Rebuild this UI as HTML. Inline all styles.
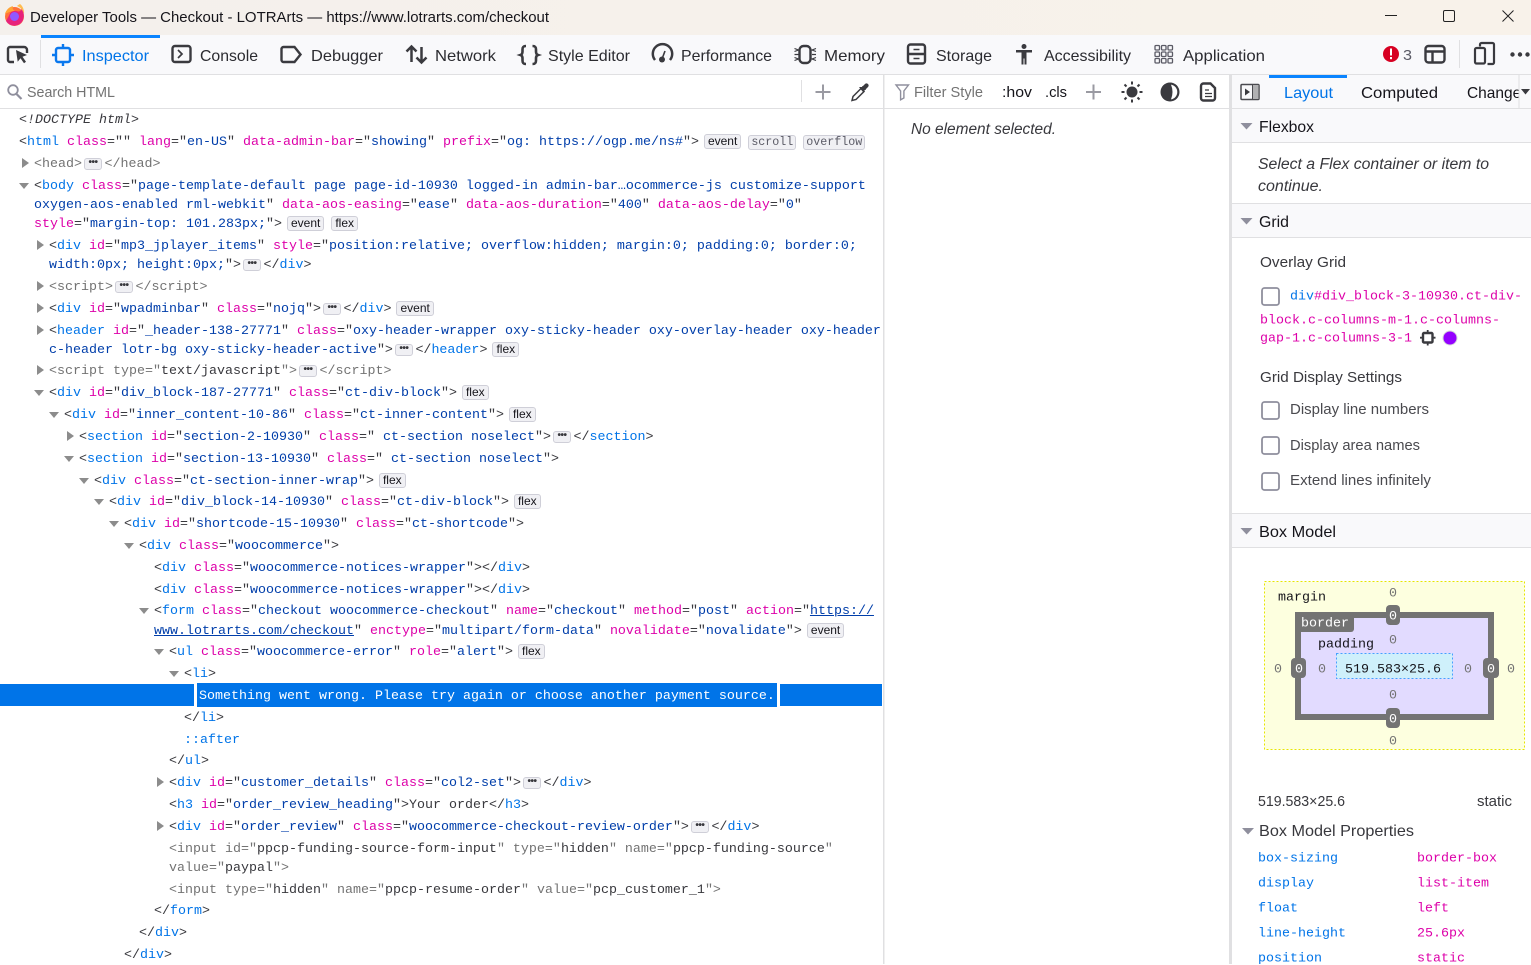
<!DOCTYPE html>
<html lang="en"><head><meta charset="utf-8"><title>Developer Tools</title>
<style>
html,body{margin:0;padding:0;width:1531px;height:964px;overflow:hidden;background:#fff}
#ui{position:absolute;left:0;top:0}
#ui text{font-family:"Liberation Sans",sans-serif}
#ui text.m{font-family:"Liberation Mono",monospace;font-size:13.33px;transform:translateY(-.5px)}
.l{position:absolute;white-space:pre;font:13.33px/18px "Liberation Mono",monospace;color:#38383d;height:18px;margin-top:2px}
.t{color:#0074e8}.a{color:#dd00a9}.v{color:#003eaa}.g{color:#737373}.u{text-decoration:underline}
.b{display:inline-block;box-sizing:border-box;height:15px;padding:0 3px;margin-left:5px;border:1px solid #cfcfd8;border-radius:3px;background:#f0f0f4;font:12px/13px "Liberation Sans",sans-serif;color:#15141a;vertical-align:0}
.b+.b{margin-left:7px}
.bm{font:11.67px/13px "Liberation Mono",monospace;color:#5b5b66;padding:0 2px}
.e{display:inline-block;box-sizing:border-box;width:18px;height:12px;margin:0 2.500px 0 2px;border:1px solid #cfcfd8;border-radius:3px;background:#f0f0f4;font:bold 10px/7px "Liberation Sans",sans-serif;color:#38383d;text-align:center;vertical-align:2px;letter-spacing:-.5px}
.ar{position:absolute;width:0;height:0}
.r{border-top:5.500px solid transparent;border-bottom:5.500px solid transparent;border-left:7px solid #8c8c8c}
.d{border-left:5.500px solid transparent;border-right:5.500px solid transparent;border-top:6.500px solid #8c8c8c;margin-top:1px}
</style></head><body>
<svg id="ui" width="1531" height="964" viewBox="0 0 1531 964" xmlns="http://www.w3.org/2000/svg">
<defs><linearGradient id="tb" x1="0" x2="1" y1="0" y2="0"><stop offset="0" stop-color="#f4f0ec"/><stop offset="1" stop-color="#f8f2ea"/></linearGradient></defs>
<rect width="1531" height="35" fill="url(#tb)"/>
<rect y="35" width="1531" height="39" fill="#f9f9fb"/>
<rect y="74" width="1531" height="1" fill="#e0e0e2"/>
<rect y="75" width="1531" height="33" fill="#fff"/>
<rect y="108" width="1231" height="1" fill="#e0e0e2"/>
<rect x="1232" y="75" width="299" height="33" fill="#f9f9fb"/>
<rect x="1232" y="108" width="299" height="1" fill="#e0e0e2"/>
<rect x="883" y="75" width="1.500" height="889" fill="#e0e0e2"/>
<rect x="1229" y="75" width="3" height="889" fill="#e0e0e2"/>
<rect x="1232" y="109" width="299" height="33" fill="#f9f9fb"/><rect x="1232" y="142" width="299" height="1" fill="#e0e0e2"/>
<rect x="1232" y="203" width="299" height="34" fill="#f9f9fb"/><rect x="1232" y="203" width="299" height="1" fill="#e0e0e2"/><rect x="1232" y="237" width="299" height="1" fill="#e0e0e2"/>
<rect x="1232" y="513" width="299" height="34" fill="#f9f9fb"/><rect x="1232" y="513" width="299" height="1" fill="#e0e0e2"/><rect x="1232" y="547" width="299" height="1" fill="#e0e0e2"/>

<!-- firefox logo -->
<circle cx="14.500" cy="16.500" r="9.500" fill="#ff7139"/><path d="M6 21a9.500 9.500 0 0 0 17-1c1.500-4 1-9-2-12.500 1 3-1 4-3 4-3-1-6-1-8 2-1 2-2 4-4 7.500z" fill="#e31587" opacity=".85"/><path d="M17 6c3 1 6 4 7 8 .5-3-1-8-4-10-1 .5-2 1-3 2z" fill="#ffbd4f"/><circle cx="14.500" cy="16.500" r="4.500" fill="#9059ff"/><path d="M5 14c1-4 4-7 8-8-1 2 0 4 2 5-3 0-6 1-10 3z" fill="#ffa436"/>
<text x="30" y="22" font-size="15" fill="#15141a" textLength="519" lengthAdjust="spacingAndGlyphs">Developer Tools — Checkout - LOTRArts — https://www.lotrarts.com/checkout</text>
<!-- window buttons -->
<path d="M1385 15.500h12" stroke="#222" stroke-width="1"/>
<rect x="1443.500" y="10.500" width="11" height="11" rx="1.500" fill="none" stroke="#222" stroke-width="1"/>
<path d="M1502.500 10.500l11 11m0-11l-11 11" stroke="#222" stroke-width="1" fill="none"/>

<!-- toolbar -->
<rect x="41" y="35" width="119" height="3" fill="#0a84ff"/>
<rect x="40" y="40" width="1" height="28" fill="#e0e0e2"/>
<path d="M14 62h-4a2 2 0 0 1-2-2v-11a2 2 0 0 1 2-2h14a3 3 0 0 1 3 3v3" fill="none" stroke="#3a3a3f" stroke-width="2.400"/>
<path d="M16 50l11 5-4.500 1.800 3.500 5-2 1.500-3.500-5-2.800 3.500z" fill="#3a3a3f"/>
<g fill="none" stroke="#0a78ee" stroke-width="2.400"><rect x="56" y="48" width="14" height="14" rx="2"/><path d="M63 44v4M63 62v4M52 55h4M70 55h4"/></g>
<text x="82" y="61" font-size="16" fill="#0074e8" textLength="67" lengthAdjust="spacingAndGlyphs">Inspector</text>
<g fill="none" stroke="#3a3a3f" stroke-width="2.400"><rect x="172.500" y="46" width="18" height="16" rx="2.500"/><path d="M178 50l4 4-4 4" stroke-width="1.700"/></g>
<text x="200" y="61" font-size="16" fill="#2b2b30" textLength="58" lengthAdjust="spacingAndGlyphs">Console</text>
<path d="M281.500 49a2 2 0 0 1 2-2h11l6 7.500-6 7.500h-11a2 2 0 0 1-2-2z" fill="none" stroke="#3a3a3f" stroke-width="2.400"/>
<text x="311" y="61" font-size="16" fill="#2b2b30" textLength="72" lengthAdjust="spacingAndGlyphs">Debugger</text>
<path d="M411.500 62V47M406.500 51.500l5-5 5 5M421.500 47v15M416.500 57.500l5 5 5-5" fill="none" stroke="#3a3a3f" stroke-width="2.500"/>
<text x="435" y="61" font-size="16" fill="#2b2b30" textLength="61" lengthAdjust="spacingAndGlyphs">Network</text>
<path d="M526 46c-3 0-3.500 1.500-3.500 3.500v2c0 2-.5 3-2 3.500 1.500.5 2 1.500 2 3.500v2c0 2 .5 3.500 3.500 3.500M532.500 46c3 0 3.500 1.500 3.500 3.500v2c0 2 .5 3 2 3.500-1.500.5-2 1.500-2 3.500v2c0 2-.5 3.500-3.500 3.500" fill="none" stroke="#3a3a3f" stroke-width="2.600"/>
<text x="548" y="61" font-size="16" fill="#2b2b30" textLength="82" lengthAdjust="spacingAndGlyphs">Style Editor</text>
<path d="M655 60a9.700 9.700 0 1 1 15 0" fill="none" stroke="#3a3a3f" stroke-width="2.500"/><circle cx="662" cy="59.500" r="3" fill="#3a3a3f"/><path d="M662 59l3-8" stroke="#3a3a3f" stroke-width="1.600"/>
<text x="681" y="61" font-size="16" fill="#2b2b30" textLength="91" lengthAdjust="spacingAndGlyphs">Performance</text>
<rect x="799.500" y="46" width="11" height="17" rx="4" fill="none" stroke="#3a3a3f" stroke-width="2.400"/>
<path d="M794.500 48.500l4 1.500-4 1.500M794.500 54.500h4M794.500 57.500l4 1.500-4 1.500M816 48.500l-4 1.500 4 1.500M816 54.500h-4M816 57.500l-4 1.500 4 1.500" stroke="#3a3a3f" stroke-width="1.200" fill="none"/>
<text x="824" y="61" font-size="16" fill="#2b2b30" textLength="61" lengthAdjust="spacingAndGlyphs">Memory</text>
<g fill="none" stroke="#3a3a3f" stroke-width="2.400"><rect x="908" y="44.500" width="17" height="19" rx="2.500"/><path d="M908 54h17"/><path d="M913.500 49.500h6M913.500 58.500h6" stroke-width="1.600"/></g>
<text x="936" y="61" font-size="16" fill="#2b2b30" textLength="56" lengthAdjust="spacingAndGlyphs">Storage</text>
<circle cx="1024" cy="46.500" r="2.500" fill="#3a3a3f"/><path d="M1016 50h16v2.500h-5.500v12h-2v-6h-1v6h-2v-12h-5.500z" fill="#3a3a3f"/>
<text x="1044" y="61" font-size="16" fill="#2b2b30" textLength="87" lengthAdjust="spacingAndGlyphs">Accessibility</text>
<g fill="none" stroke="#5b5b66" stroke-width="1.300"><rect x="1155" y="45.500" width="4.500" height="4.500" rx="1"/><rect x="1161.500" y="45.500" width="4.500" height="4.500" rx="1"/><rect x="1168" y="45.500" width="4.500" height="4.500" rx="1"/><rect x="1155" y="52" width="4.500" height="4.500" rx="1"/><rect x="1161.500" y="52" width="4.500" height="4.500" rx="1"/><rect x="1168" y="52" width="4.500" height="4.500" rx="1"/><rect x="1155" y="58.500" width="4.500" height="4.500" rx="1"/><rect x="1161.500" y="58.500" width="4.500" height="4.500" rx="1"/><rect x="1168" y="58.500" width="4.500" height="4.500" rx="1"/></g>
<text x="1183" y="61" font-size="16" fill="#2b2b30" textLength="82" lengthAdjust="spacingAndGlyphs">Application</text>
<circle cx="1391" cy="54" r="8" fill="#d70022"/><rect x="1390" y="48.500" width="2" height="7" fill="#fff"/><rect x="1390" y="57" width="2" height="2.200" fill="#fff"/>
<text x="1403" y="60" font-size="15" fill="#5b5b66" textLength="9" lengthAdjust="spacingAndGlyphs">3</text>
<g fill="none" stroke="#3a3a3f" stroke-width="2.400"><rect x="1425.500" y="46" width="19" height="16.500" rx="3"/><path d="M1425.500 51.500h19M1432.500 51.500v11"/></g>
<rect x="1459" y="40" width="1" height="28" fill="#e0e0e2"/>
<path d="M1480 46.500v-2a1.500 1.500 0 0 1 1.500-1.500h11a1.500 1.500 0 0 1 1.500 1.500v18a1.500 1.500 0 0 1-1.500 1.500h-5" fill="none" stroke="#3a3a3f" stroke-width="2.200"/><rect x="1475" y="48" width="10" height="15.500" rx="1.500" fill="none" stroke="#3a3a3f" stroke-width="2.200"/>
<circle cx="1512.500" cy="54.500" r="2.200" fill="#3a3a3f"/><circle cx="1520" cy="54.500" r="2.200" fill="#3a3a3f"/><circle cx="1527.500" cy="54.500" r="2.200" fill="#3a3a3f"/>

<!-- search row -->
<circle cx="13" cy="90" r="4.800" fill="none" stroke="#8f8f9d" stroke-width="1.800"/><path d="M16.500 94l5 5" stroke="#8f8f9d" stroke-width="2.200"/>
<text x="27" y="97" font-size="15" fill="#737373" textLength="88" lengthAdjust="spacingAndGlyphs">Search HTML</text>
<rect x="801" y="80" width="1" height="22" fill="#e0e0e2"/>
<path d="M823 84.500v15M815.500 92h15" stroke="#9a9aa2" stroke-width="2"/>
<path d="M852 100.500l1-4 8-8 3 3-8 8z" fill="none" stroke="#3a3a3f" stroke-width="1.500"/><path d="M859 87l4 5 2-2c1 0 1-1 1-1l2-2c2-2-1-5-3-3l-2 2s-1 0-1 1z" fill="#3a3a3f"/>
<path d="M896 85h12.500l-4.600 6v7l-3.300 1.800V91z" fill="none" stroke="#8f8f9d" stroke-width="1.400"/>
<text x="914" y="97" font-size="15" fill="#737373" textLength="69" lengthAdjust="spacingAndGlyphs">Filter Style</text>
<text x="1002" y="97" font-size="15" fill="#15141a" textLength="30" lengthAdjust="spacingAndGlyphs">:hov</text>
<text x="1045" y="97" font-size="15" fill="#15141a" textLength="22" lengthAdjust="spacingAndGlyphs">.cls</text>
<path d="M1093.500 84.500v15M1086 92h15" stroke="#9a9aa2" stroke-width="2"/>
<circle cx="1132" cy="92" r="5.500" fill="#3a3a3f"/><path d="M1132 81.500v3M1132 99.500v3M1121.500 92h3M1139.500 92h3M1124.500 84.500l2 2M1137.500 97.500l2 2M1124.500 99.500l2-2M1137.500 86.500l2-2" stroke="#3a3a3f" stroke-width="2"/>
<circle cx="1170" cy="92" r="9.500" fill="#3a3a3f"/><path d="M1171 84.600a7.500 7.500 0 0 1 0 14.800Q1174 92 1171 84.600z" fill="#fff"/>
<path d="M1201 86a2.500 2.500 0 0 1 2.500-2.500h7l4.500 4.500v10a2.500 2.500 0 0 1-2.500 2.500h-9a2.500 2.500 0 0 1-2.500-2.500z" fill="none" stroke="#3a3a3f" stroke-width="2.400"/><path d="M1205 90h4M1205 93.500h7M1205 96.500h7" stroke="#3a3a3f" stroke-width="1.200"/>
<rect x="1241" y="84.500" width="18" height="15" rx="1" fill="none" stroke="#4a4a4f" stroke-width="1.500"/><rect x="1253" y="85" width="5.500" height="14" fill="#b1b1b3"/><path d="M1245 88.500l5 3.500-5 3.500z" fill="#3a3a3f"/><path d="M1252.500 85v14" stroke="#4a4a4f" stroke-width="1"/>
<rect x="1269" y="75" width="78" height="3" fill="#0a84ff"/>
<text x="1284" y="98" font-size="16" fill="#0074e8" textLength="49" lengthAdjust="spacingAndGlyphs">Layout</text>
<text x="1361" y="98" font-size="16" fill="#15141a" textLength="77" lengthAdjust="spacingAndGlyphs">Computed</text>
<text x="1467" y="98" font-size="16" fill="#15141a" textLength="62" lengthAdjust="spacingAndGlyphs">Changes</text>
<rect x="1519" y="78" width="12" height="30" fill="#f9f9fb"/><rect x="1518.500" y="75" width="1" height="33" fill="#e0e0e2"/>
<path d="M1521 89h9l-4.500 5.500z" fill="#3a3a3f"/>

<text x="911" y="134" font-size="15.500" font-style="italic" fill="#38383d" textLength="145" lengthAdjust="spacingAndGlyphs">No element selected.</text>

<!-- sidebar -->
<path d="M1240.500 123h12l-6 6.500z" fill="#8f8f9d"/>
<text x="1259" y="132" font-size="16" fill="#15141a" textLength="55" lengthAdjust="spacingAndGlyphs">Flexbox</text>
<text x="1258" y="169" font-size="15.500" font-style="italic" fill="#38383d" textLength="231" lengthAdjust="spacingAndGlyphs">Select a Flex container or item to</text>
<text x="1258" y="191" font-size="15.500" font-style="italic" fill="#38383d" textLength="65" lengthAdjust="spacingAndGlyphs">continue.</text>
<path d="M1240.500 218h12l-6 6.500z" fill="#8f8f9d"/>
<text x="1259" y="227" font-size="16" fill="#15141a" textLength="30" lengthAdjust="spacingAndGlyphs">Grid</text>
<text x="1260" y="267" font-size="15" fill="#38383d" textLength="86" lengthAdjust="spacingAndGlyphs">Overlay Grid</text>
<rect x="1262" y="288" width="17" height="17" rx="2.500" fill="#fff" stroke="#8f8f9d" stroke-width="1.800"/>
<text class="m" x="1290" y="300" fill="#dd00a9"><tspan fill="#0074e8">div</tspan>#div_block-3-10930.ct-div-</text>
<text class="m" x="1260" y="324" fill="#dd00a9">block.c-columns-m-1.c-columns-</text>
<text class="m" x="1260" y="342" fill="#dd00a9">gap-1.c-columns-3-1</text>
<g fill="none" stroke="#3a3a3f"><rect x="1423" y="333" width="9.500" height="9.500" rx="1" stroke-width="2.400"/><path d="M1427.700 330v3M1427.700 342.500v3M1420 337.700h3M1432.500 337.700h3" stroke-width="1.800"/></g>
<circle cx="1450" cy="338" r="7" fill="#9400ff" stroke="#d7d7db" stroke-width="1"/>
<text x="1260" y="382" font-size="15" fill="#38383d" textLength="142" lengthAdjust="spacingAndGlyphs">Grid Display Settings</text>
<rect x="1262" y="402" width="17" height="17" rx="2.500" fill="#fff" stroke="#8f8f9d" stroke-width="1.800"/>
<text x="1290" y="414" font-size="14.500" fill="#4a4a4f" textLength="139" lengthAdjust="spacingAndGlyphs">Display line numbers</text>
<rect x="1262" y="437" width="17" height="17" rx="2.500" fill="#fff" stroke="#8f8f9d" stroke-width="1.800"/>
<text x="1290" y="450" font-size="14.500" fill="#4a4a4f" textLength="130" lengthAdjust="spacingAndGlyphs">Display area names</text>
<rect x="1262" y="473" width="17" height="17" rx="2.500" fill="#fff" stroke="#8f8f9d" stroke-width="1.800"/>
<text x="1290" y="485" font-size="14.500" fill="#4a4a4f" textLength="141" lengthAdjust="spacingAndGlyphs">Extend lines infinitely</text>
<path d="M1240.500 528h12l-6 6.500z" fill="#8f8f9d"/>
<text x="1259" y="537" font-size="16" fill="#15141a" textLength="77" lengthAdjust="spacingAndGlyphs">Box Model</text>

<!-- box model -->
<rect x="1264.500" y="581.500" width="260" height="168" fill="#fdffdf" stroke="#e6e600" stroke-width="1" stroke-dasharray="2 2"/>
<rect x="1298" y="615" width="193" height="102" fill="#e2dbff" stroke="#737373" stroke-width="6"/>
<path d="M1298 615h56v14a3 3 0 0 1-3 3h-53z" fill="#737373"/>
<rect x="1336.500" y="653.500" width="116" height="25" fill="#cff0fb" stroke="#45a1ff" stroke-width="1" stroke-dasharray="2 2"/>
<rect x="1386" y="605" width="14" height="20" rx="4" fill="#737373"/>
<rect x="1386" y="708" width="14" height="20" rx="4" fill="#737373"/>
<rect x="1291" y="658" width="15" height="20" rx="4" fill="#737373"/>
<rect x="1483" y="658" width="16" height="20" rx="4" fill="#737373"/>
<text class="m" x="1278" y="601" fill="#15141a">margin</text>
<text class="m" x="1301" y="627" fill="#fff">border</text>
<text class="m" x="1318" y="648" fill="#15141a">padding</text>
<text class="m" x="1345" y="673" fill="#15141a">519.583×25.6</text>
<g fill="#737373">
<text class="m" x="1389" y="597">0</text><text class="m" x="1389" y="644">0</text><text class="m" x="1389" y="699">0</text><text class="m" x="1389" y="745">0</text>
<text class="m" x="1274" y="673">0</text><text class="m" x="1318" y="673">0</text><text class="m" x="1464" y="673">0</text><text class="m" x="1507" y="673">0</text>
</g>
<g fill="#fff">
<text class="m" x="1389" y="620">0</text><text class="m" x="1389" y="723">0</text><text class="m" x="1295" y="673">0</text><text class="m" x="1487" y="673">0</text>
</g>
<text x="1258" y="806" font-size="14.500" fill="#38383d" textLength="87" lengthAdjust="spacingAndGlyphs">519.583×25.6</text>
<text x="1477" y="806" font-size="14.500" fill="#38383d" textLength="35" lengthAdjust="spacingAndGlyphs">static</text>
<path d="M1242 828h12l-6 6.500z" fill="#8f8f9d"/>
<text x="1259" y="836" font-size="16" fill="#38383d" textLength="155" lengthAdjust="spacingAndGlyphs">Box Model Properties</text>
<g fill="#0074e8"><text class="m" x="1258" y="862">box-sizing</text><text class="m" x="1258" y="887">display</text><text class="m" x="1258" y="912">float</text><text class="m" x="1258" y="937">line-height</text><text class="m" x="1258" y="962">position</text></g>
<g fill="#dd00a9"><text class="m" x="1417" y="862">border-box</text><text class="m" x="1417" y="887">list-item</text><text class="m" x="1417" y="912">left</text><text class="m" x="1417" y="937">25.6px</text><text class="m" x="1417" y="962">static</text></g>
</svg>

<!-- selected row -->
<div style="position:absolute;left:0;top:684px;width:882px;height:22px;background:#0074e8"></div>
<div style="position:absolute;left:194px;top:683px;width:586px;height:24px;background:#fff"></div>
<div style="position:absolute;left:197px;top:683px;width:580px;height:24px;background:#0074e8"></div>

<!-- markup -->
<div class="l" style="left:19px;top:110px;font-style:italic">&lt;!DOCTYPE html&gt;</div>
<div class="l" style="left:19px;top:132px">&lt;<span class="t">html</span> <span class="a">class</span>="" <span class="a">lang</span>="<span class="v">en-US</span>" <span class="a">data-admin-bar</span>="<span class="v">showing</span>" <span class="a">prefix</span>="<span class="v">og: https://ogp.me/ns#</span>"&gt;<span class="b">event</span><span class="b bm">scroll</span><span class="b bm">overflow</span></div>
<i class="ar r" style="left:22px;top:158px"></i>
<div class="l g" style="left:34px;top:154px">&lt;head&gt;<span class="e">•••</span>&lt;/head&gt;</div>
<i class="ar d" style="left:19px;top:182px"></i>
<div class="l" style="left:34px;top:176px">&lt;<span class="t">body</span> <span class="a">class</span>="<span class="v">page-template-default page page-id-10930 logged-in admin-bar…ocommerce-js customize-support</span></div>
<div class="l v" style="left:34px;top:195px">oxygen-aos-enabled rml-webkit<span style="color:#38383d">"</span> <span class="a">data-aos-easing</span><span style="color:#38383d">="</span>ease<span style="color:#38383d">"</span> <span class="a">data-aos-duration</span><span style="color:#38383d">="</span>400<span style="color:#38383d">"</span> <span class="a">data-aos-delay</span><span style="color:#38383d">="</span>0<span style="color:#38383d">"</span></div>
<div class="l" style="left:34px;top:214px"><span class="a">style</span>="<span class="v">margin-top: 101.283px;</span>"&gt;<span class="b">event</span><span class="b">flex</span></div>
<i class="ar r" style="left:37px;top:240px"></i>
<div class="l" style="left:49px;top:236px">&lt;<span class="t">div</span> <span class="a">id</span>="<span class="v">mp3_jplayer_items</span>" <span class="a">style</span>="<span class="v">position:relative; overflow:hidden; margin:0; padding:0; border:0;</span></div>
<div class="l" style="left:49px;top:255px"><span class="v">width:0px; height:0px;</span>"&gt;<span class="e">•••</span>&lt;/<span class="t">div</span>&gt;</div>
<i class="ar r" style="left:37px;top:281px"></i>
<div class="l g" style="left:49px;top:277px">&lt;script&gt;<span class="e">•••</span>&lt;/script&gt;</div>
<i class="ar r" style="left:37px;top:303px"></i>
<div class="l" style="left:49px;top:299px">&lt;<span class="t">div</span> <span class="a">id</span>="<span class="v">wpadminbar</span>" <span class="a">class</span>="<span class="v">nojq</span>"&gt;<span class="e">•••</span>&lt;/<span class="t">div</span>&gt;<span class="b">event</span></div>
<i class="ar r" style="left:37px;top:325px"></i>
<div class="l" style="left:49px;top:321px">&lt;<span class="t">header</span> <span class="a">id</span>="<span class="v">_header-138-27771</span>" <span class="a">class</span>="<span class="v">oxy-header-wrapper oxy-sticky-header oxy-overlay-header oxy-header</span></div>
<div class="l" style="left:49px;top:340px"><span class="v">c-header lotr-bg oxy-sticky-header-active</span>"&gt;<span class="e">•••</span>&lt;/<span class="t">header</span>&gt;<span class="b">flex</span></div>
<i class="ar r" style="left:37px;top:365px"></i>
<div class="l g" style="left:49px;top:361px">&lt;script type="<span style="color:#38383d">text/javascript</span>"&gt;<span class="e">•••</span>&lt;/script&gt;</div>
<i class="ar d" style="left:34px;top:389px"></i>
<div class="l" style="left:49px;top:383px">&lt;<span class="t">div</span> <span class="a">id</span>="<span class="v">div_block-187-27771</span>" <span class="a">class</span>="<span class="v">ct-div-block</span>"&gt;<span class="b">flex</span></div>
<i class="ar d" style="left:49px;top:411px"></i>
<div class="l" style="left:64px;top:405px">&lt;<span class="t">div</span> <span class="a">id</span>="<span class="v">inner_content-10-86</span>" <span class="a">class</span>="<span class="v">ct-inner-content</span>"&gt;<span class="b">flex</span></div>
<i class="ar r" style="left:67px;top:431px"></i>
<div class="l" style="left:79px;top:427px">&lt;<span class="t">section</span> <span class="a">id</span>="<span class="v">section-2-10930</span>" <span class="a">class</span>="<span class="v"> ct-section noselect</span>"&gt;<span class="e">•••</span>&lt;/<span class="t">section</span>&gt;</div>
<i class="ar d" style="left:64px;top:455px"></i>
<div class="l" style="left:79px;top:449px">&lt;<span class="t">section</span> <span class="a">id</span>="<span class="v">section-13-10930</span>" <span class="a">class</span>="<span class="v"> ct-section noselect</span>"&gt;</div>
<i class="ar d" style="left:79px;top:477px"></i>
<div class="l" style="left:94px;top:471px">&lt;<span class="t">div</span> <span class="a">class</span>="<span class="v">ct-section-inner-wrap</span>"&gt;<span class="b">flex</span></div>
<i class="ar d" style="left:94px;top:498px"></i>
<div class="l" style="left:109px;top:492px">&lt;<span class="t">div</span> <span class="a">id</span>="<span class="v">div_block-14-10930</span>" <span class="a">class</span>="<span class="v">ct-div-block</span>"&gt;<span class="b">flex</span></div>
<i class="ar d" style="left:109px;top:520px"></i>
<div class="l" style="left:124px;top:514px">&lt;<span class="t">div</span> <span class="a">id</span>="<span class="v">shortcode-15-10930</span>" <span class="a">class</span>="<span class="v">ct-shortcode</span>"&gt;</div>
<i class="ar d" style="left:124px;top:542px"></i>
<div class="l" style="left:139px;top:536px">&lt;<span class="t">div</span> <span class="a">class</span>="<span class="v">woocommerce</span>"&gt;</div>
<div class="l" style="left:154px;top:558px">&lt;<span class="t">div</span> <span class="a">class</span>="<span class="v">woocommerce-notices-wrapper</span>"&gt;&lt;/<span class="t">div</span>&gt;</div>
<div class="l" style="left:154px;top:580px">&lt;<span class="t">div</span> <span class="a">class</span>="<span class="v">woocommerce-notices-wrapper</span>"&gt;&lt;/<span class="t">div</span>&gt;</div>
<i class="ar d" style="left:139px;top:607px"></i>
<div class="l" style="left:154px;top:601px">&lt;<span class="t">form</span> <span class="a">class</span>="<span class="v">checkout woocommerce-checkout</span>" <span class="a">name</span>="<span class="v">checkout</span>" <span class="a">method</span>="<span class="v">post</span>" <span class="a">action</span>="<span class="v u">https://</span></div>
<div class="l" style="left:154px;top:621px"><span class="v u">www.lotrarts.com/checkout</span>" <span class="a">enctype</span>="<span class="v">multipart/form-data</span>" <span class="a">novalidate</span>="<span class="v">novalidate</span>"&gt;<span class="b">event</span></div>
<i class="ar d" style="left:154px;top:648px"></i>
<div class="l" style="left:169px;top:642px">&lt;<span class="t">ul</span> <span class="a">class</span>="<span class="v">woocommerce-error</span>" <span class="a">role</span>="<span class="v">alert</span>"&gt;<span class="b">flex</span></div>
<i class="ar d" style="left:169px;top:670px"></i>
<div class="l" style="left:184px;top:664px">&lt;<span class="t">li</span>&gt;</div>
<div class="l" style="left:199px;top:686px;color:#fff">Something went wrong. Please try again or choose another payment source.</div>
<div class="l" style="left:184px;top:708px">&lt;/<span class="t">li</span>&gt;</div>
<div class="l t" style="left:184px;top:730px">::after</div>
<div class="l" style="left:169px;top:751px">&lt;/<span class="t">ul</span>&gt;</div>
<i class="ar r" style="left:157px;top:777px"></i>
<div class="l" style="left:169px;top:773px">&lt;<span class="t">div</span> <span class="a">id</span>="<span class="v">customer_details</span>" <span class="a">class</span>="<span class="v">col2-set</span>"&gt;<span class="e">•••</span>&lt;/<span class="t">div</span>&gt;</div>
<div class="l" style="left:169px;top:795px">&lt;<span class="t">h3</span> <span class="a">id</span>="<span class="v">order_review_heading</span>"&gt;Your order&lt;/<span class="t">h3</span>&gt;</div>
<i class="ar r" style="left:157px;top:821px"></i>
<div class="l" style="left:169px;top:817px">&lt;<span class="t">div</span> <span class="a">id</span>="<span class="v">order_review</span>" <span class="a">class</span>="<span class="v">woocommerce-checkout-review-order</span>"&gt;<span class="e">•••</span>&lt;/<span class="t">div</span>&gt;</div>
<div class="l g" style="left:169px;top:839px">&lt;input id="<span style="color:#38383d">ppcp-funding-source-form-input</span>" type="<span style="color:#38383d">hidden</span>" name="<span style="color:#38383d">ppcp-funding-source</span>"</div>
<div class="l g" style="left:169px;top:858px">value="<span style="color:#38383d">paypal</span>"&gt;</div>
<div class="l g" style="left:169px;top:880px">&lt;input type="<span style="color:#38383d">hidden</span>" name="<span style="color:#38383d">ppcp-resume-order</span>" value="<span style="color:#38383d">pcp_customer_1</span>"&gt;</div>
<div class="l" style="left:154px;top:901px">&lt;/<span class="t">form</span>&gt;</div>
<div class="l" style="left:139px;top:923px">&lt;/<span class="t">div</span>&gt;</div>
<div class="l" style="left:124px;top:945px">&lt;/<span class="t">div</span>&gt;</div>
</body></html>
